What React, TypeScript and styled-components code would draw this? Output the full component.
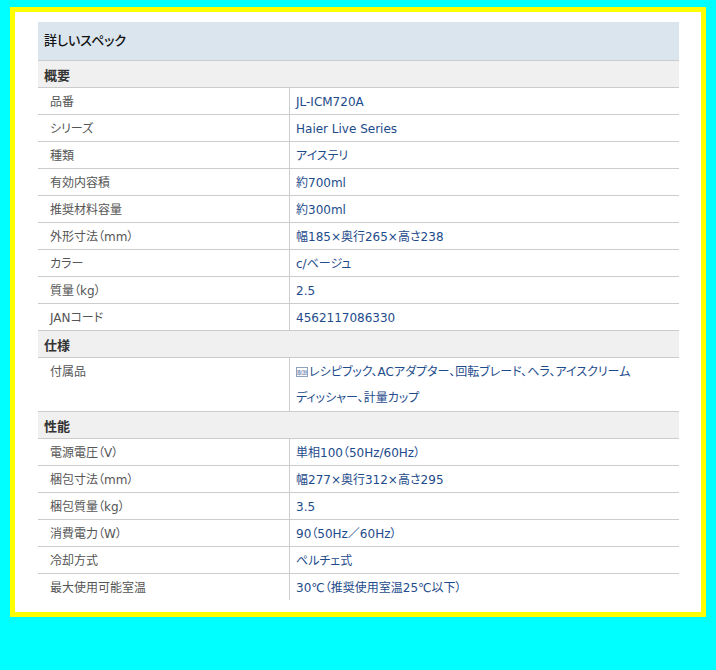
import React from "react";
import styled, { createGlobalStyle } from "styled-components";

const GlobalStyle = createGlobalStyle`
  html, body {
    margin: 0;
    padding: 0;
    background: #00ffff;
  }
  body {
    font-family: "DejaVu Sans", "Noto Sans CJK JP", sans-serif;
    font-size: 12px;
  }
`;

const Page = styled.div`
  padding: 7px 10px 0 10px;
`;

const Frame = styled.div`
  box-sizing: border-box;
  width: 696px;
  border: 5px solid #ffff00;
  background: #ffffff;
  padding: 10px 22px 12px 23px;
`;

const Spec = styled.div`
  width: 641px;
  display: flex;
  flex-direction: column;
`;

const Title = styled.div`
  height: 38px;
  line-height: 36px;
  background: #dbe5ee;
  border-bottom: 1px solid #c9ced3;
  padding-left: 6px;
  font-family: "Noto Sans CJK JP", sans-serif;
  font-weight: 500;
  font-size: 13px;
  color: #111;
  font-feature-settings: "palt";
`;

const Section = styled.div`
  height: 25px;
  padding: 1px 0 0 6px;
  line-height: 25px;
  background: #f0f0f0;
  border-bottom: 1px solid #cccccc;
  font-family: "Noto Sans CJK JP", sans-serif;
  font-weight: bold;
  font-size: 13px;
  color: #333;
`;

const Row = styled.div<{ $last?: boolean; $lines?: number }>`
  display: flex;
  height: ${(p) => ((p.$lines ?? 1) === 1 ? 26 : 53)}px;
  border-bottom: ${(p) => (p.$last ? "none" : "1px solid #cccccc")};
`;

const Label = styled.div`
  box-sizing: border-box;
  width: 252px;
  flex: none;
  padding: 2px 0 0 12px;
  line-height: 24px;
  color: #555;
  border-right: 1px solid #cccccc;
  font-feature-settings: "palt";
`;

const Value = styled.div<{ $lines?: number }>`
  flex: 1;
  padding: ${(p) => ((p.$lines ?? 1) === 1 ? "2px" : "1px")} 0 0 6px;
  line-height: ${(p) => ((p.$lines ?? 1) === 1 ? 24 : 26)}px;
  color: #1d4b8b;
  font-feature-settings: "palt";
`;

const Tiny = styled.span`
  display: inline-block;
  font-size: 5px;
  line-height: 8px;
  vertical-align: 2px;
  border: 1px solid #8fa3c0;
  color: #1d4b8b;
  margin-right: 1px;
`;

type Item = { label: string; value: React.ReactNode; lines?: number };

const overview: Item[] = [
  { label: "品番", value: "JL-ICM720A" },
  { label: "シリーズ", value: "Haier Live Series" },
  { label: "種類", value: "アイステリ" },
  { label: "有効内容積", value: "約700ml" },
  { label: "推奨材料容量", value: "約300ml" },
  { label: "外形寸法（mm）", value: "幅185×奥行265×高さ238" },
  { label: "カラー", value: "c/ベージュ" },
  { label: "質量（kg）", value: "2.5" },
  { label: "JANコード", value: "4562117086330" },
];

const spec: Item[] = [
  {
    label: "付属品",
    lines: 2,
    value: (
      <>
        <Tiny>取説</Tiny>レシピブック、ACアダプター、回転ブレード、ヘラ、アイスクリーム
        <br />
        ディッシャー、計量カップ
      </>
    ),
  },
];

const perf: Item[] = [
  { label: "電源電圧（V）", value: "単相100（50Hz/60Hz）" },
  { label: "梱包寸法（mm）", value: "幅277×奥行312×高さ295" },
  { label: "梱包質量（kg）", value: "3.5" },
  { label: "消費電力（W）", value: "90（50Hz／60Hz）" },
  { label: "冷却方式", value: "ペルチェ式" },
  { label: "最大使用可能室温", value: "30℃（推奨使用室温25℃以下）" },
];

const Rows: React.FC<{ items: Item[]; lastGroup?: boolean }> = ({ items, lastGroup }) => (
  <>
    {items.map((it, i) => (
      <Row key={it.label} $lines={it.lines} $last={lastGroup && i === items.length - 1}>
        <Label>{it.label}</Label>
        <Value $lines={it.lines}>{it.value}</Value>
      </Row>
    ))}
  </>
);

export default function App() {
  return (
    <Page>
      <GlobalStyle />
      <Frame>
        <Spec>
          <Title>詳しいスペック</Title>
          <Section>概要</Section>
          <Rows items={overview} />
          <Section>仕様</Section>
          <Rows items={spec} />
          <Section>性能</Section>
          <Rows items={perf} lastGroup />
        </Spec>
      </Frame>
    </Page>
  );
}
